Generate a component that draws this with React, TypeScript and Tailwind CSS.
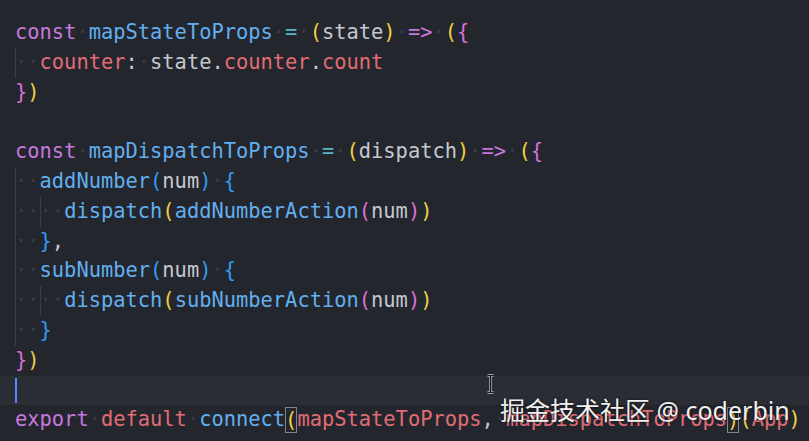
import React from "react";

type Tok = [string, string];

// token colours
const C: Record<string, string> = {
  k: "text-[#c678dd]",
  f: "text-[#61afef]",
  r: "text-[#e06c75]",
  o: "text-[#56b6c2]",
  t: "text-[#c3c8d0]",
  y: "text-[#f0cf45]",
  m: "text-[#da70d6]",
  b: "text-[#2f9cf5]",
  d: "text-[#393c45]",
  Y: "text-[#f0cf45] outline-1 outline-[#7f848e] -outline-offset-1 self-center h-[26px] leading-[26px]",
};

const sp: Tok = ["·", "d"];

const lines: { indent: number; toks: Tok[]; current?: boolean }[] = [
  {
    indent: 0,
    toks: [["const", "k"], sp, ["mapStateToProps", "f"], sp, ["=", "o"], sp, ["(", "y"], ["state", "t"], [")", "y"], sp, ["=>", "k"], sp, ["(", "y"], ["{", "m"]],
  },
  { indent: 1, toks: [["counter", "r"], [":", "t"], sp, ["state.", "t"], ["counter", "r"], [".", "t"], ["count", "r"]] },
  { indent: 0, toks: [["}", "m"], [")", "y"]] },
  { indent: 0, toks: [] },
  {
    indent: 0,
    toks: [["const", "k"], sp, ["mapDispatchToProps", "f"], sp, ["=", "o"], sp, ["(", "y"], ["dispatch", "t"], [")", "y"], sp, ["=>", "k"], sp, ["(", "y"], ["{", "m"]],
  },
  { indent: 1, toks: [["addNumber", "f"], ["(", "b"], ["num", "t"], [")", "b"], sp, ["{", "b"]] },
  { indent: 2, toks: [["dispatch", "f"], ["(", "y"], ["addNumberAction", "f"], ["(", "m"], ["num", "t"], [")", "m"], [")", "y"]] },
  { indent: 1, toks: [["}", "b"], [",", "t"]] },
  { indent: 1, toks: [["subNumber", "f"], ["(", "b"], ["num", "t"], [")", "b"], sp, ["{", "b"]] },
  { indent: 2, toks: [["dispatch", "f"], ["(", "y"], ["subNumberAction", "f"], ["(", "m"], ["num", "t"], [")", "m"], [")", "y"]] },
  { indent: 1, toks: [["}", "b"]] },
  { indent: 0, toks: [["}", "m"], [")", "y"]] },
  { indent: 0, toks: [], current: true },
  {
    indent: 0,
    toks: [["export", "k"], sp, ["default", "r"], sp, ["connect", "f"], ["(", "Y"], ["mapStateToProps", "r"], [",", "t"], sp, ["mapDispatchToProps", "r"], [")", "Y"], ["(", "y"], ["App", "r"], [")", "y"]],
  },
];

const App: React.FC = () => {
  return (
    <div
      className="relative w-full h-[441px] overflow-hidden bg-[#24262d] pt-[18px] text-[20.4px]"
      style={{ fontFamily: '"DejaVu Sans Mono", "Liberation Mono", monospace' }}
    >
      {lines.map((line, i) => (
        <div
          key={i}
          className={`flex h-[29.8px] leading-[29.8px] whitespace-pre pl-[15px] ${line.current ? "bg-[#2b2d35]" : ""}`}
        >
          {line.current && <span className="w-[2px] my-[2px] bg-[#528bff]" />}
          {Array.from({ length: line.indent }).map((_, j) => (
            <span key={j} className="text-[#393c45] shadow-[inset_1px_0_0_#3a3d46]">
              ··
            </span>
          ))}
          {line.toks.map(([text, c], j) => (
            <span key={j} className={C[c]}>
              {text}
            </span>
          ))}
        </div>
      ))}

      {/* mouse I-beam */}
      <svg className="absolute left-[486px] top-[374px]" width="9" height="20" viewBox="0 0 9 20">
        <path d="M1.5 1.5h6M4.5 1.5v17M1.5 18.5h6" stroke="#9a9da3" strokeWidth="3" fill="none" />
        <path d="M1.5 1.5h6M4.5 1.5v17M1.5 18.5h6" stroke="#15161a" strokeWidth="1.2" fill="none" />
      </svg>

      {/* watermark */}
      <div
        className="absolute left-[500px] top-[394px] text-[25px] leading-[32px] text-[#f0f0f0] whitespace-nowrap [text-shadow:0_0_3px_rgba(0,0,0,0.7)]"
        style={{ fontFamily: '"Noto Sans", "Noto Sans CJK SC", sans-serif' }}
      >
        掘金技术社区 @ coderbin
      </div>
    </div>
  );
};

export default App;
